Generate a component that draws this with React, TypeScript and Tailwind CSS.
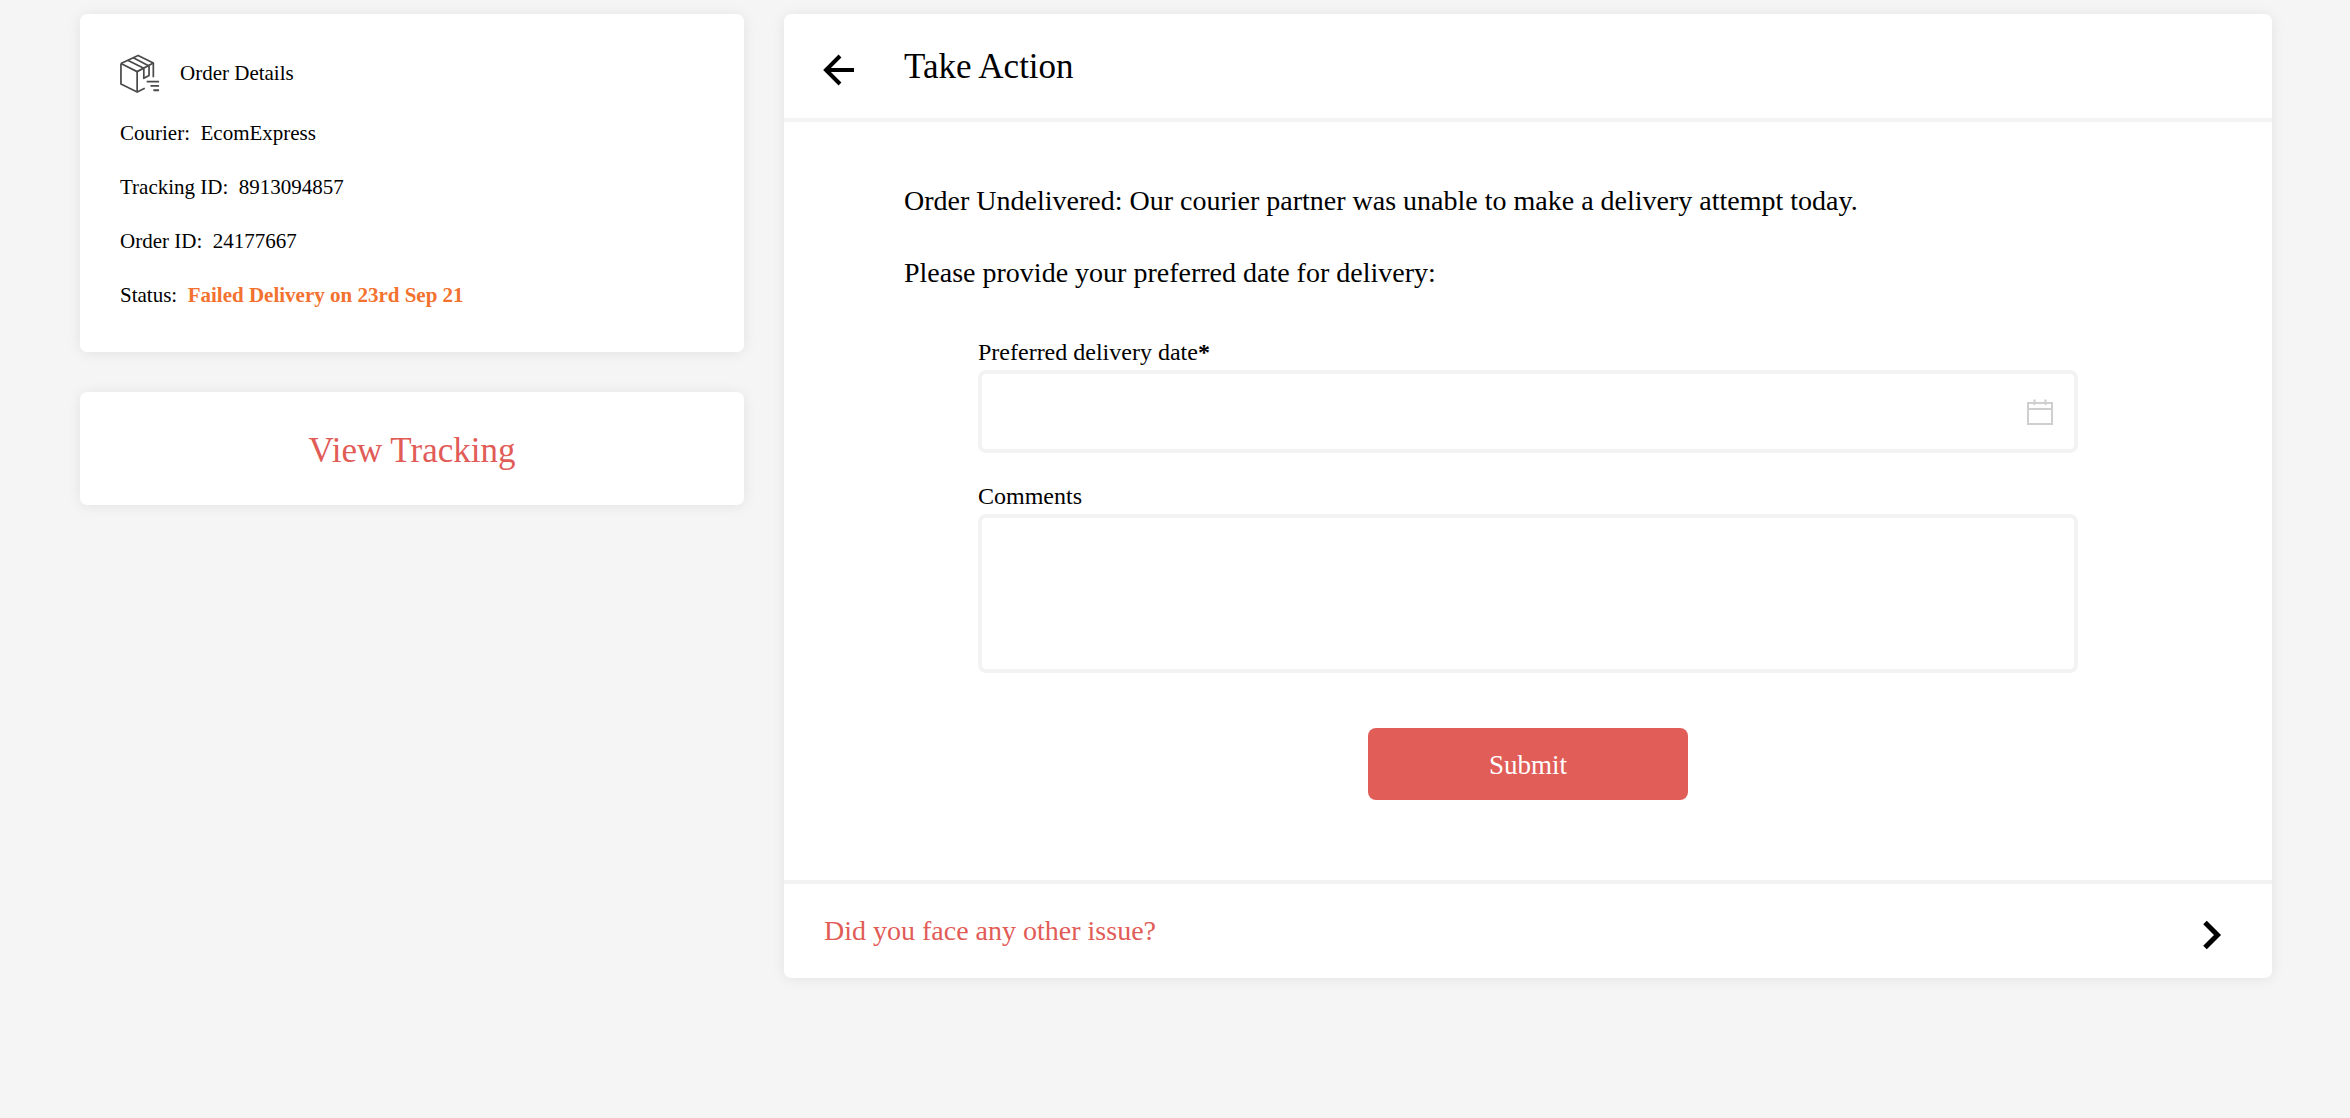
const serif = "font-['Liberation_Serif',serif]";

function PackageIcon() {
  return (
    <svg width="40" height="40" viewBox="0 0 42 41" fill="none" stroke="#4a4a4a" strokeWidth="1.8" strokeLinejoin="round" className="shrink-0">
      <path d="M1 9.5 L19 1 L35 9 L35 24" />
      <path d="M1 9.5 L18 18 L35 9" />
      <path d="M1 9.5 V31 L18 39.5 L26 35.5" />
      <path d="M18 18 V39.5" />
      <path d="M8 6 L25 14.5 M14 3.5 L30.5 12" />
      <path d="M25 14.5 V25 L30.5 22 V12" />
      <path d="M28 28.5 H41 M32 33 H41 M35 37.5 H41" strokeWidth="2" />
    </svg>
  );
}

function Row({ label, value }: { label: string; value: string }) {
  return (
    <div className="text-[21px] leading-[28px] text-black">
      {label}:{"\u00a0\u00a0"}{value}
    </div>
  );
}

export default function App() {
  return (
    <div className={`${serif} min-h-[1118px] bg-[#f5f5f5] pl-[80px] pt-[14px] flex items-start gap-[40px]`}>
      <div className="w-[664px] flex flex-col gap-[40px]">
        <div className="bg-white rounded-[7px] shadow-[0_1px_14px_rgba(0,0,0,0.08)] h-[338px] pl-[40px] pt-[40px] flex flex-col">
          <div className="flex items-center gap-[20px] text-[21px] text-black">
            <PackageIcon />
            <span className="-mt-[1px]">Order Details</span>
          </div>
          <div className="mt-[25px] flex flex-col gap-[26px]">
            <Row label="Courier" value="EcomExpress" />
            <Row label="Tracking ID" value="8913094857" />
            <Row label="Order ID" value="24177667" />
            <div className="text-[21px] leading-[28px] text-black">
              Status:{"\u00a0\u00a0"}<span className="font-bold text-[#f3722f]">Failed Delivery on 23rd Sep 21</span>
            </div>
          </div>
        </div>
        <div className="bg-white rounded-[7px] shadow-[0_1px_14px_rgba(0,0,0,0.08)] h-[113px] pt-[5px] flex items-center justify-center text-[35px] text-[#e15c57]">
          View Tracking
        </div>
      </div>

      <div className="w-[1488px] bg-white rounded-[7px] shadow-[0_1px_14px_rgba(0,0,0,0.08)]">
        <div className="h-[108px] border-b-[4px] border-[#f3f3f3] flex items-center pl-[38px]">
          <svg width="34" height="34" viewBox="0 0 34 34" fill="none" stroke="black" strokeWidth="4" className="shrink-0 mt-[8px]">
            <path d="M32 17 H4 M18 3 L4 17 L18 31" />
          </svg>
          <h1 className="ml-[48px] mt-[2px] text-[35px] font-normal text-black">Take Action</h1>
        </div>

        <div className="h-[762px] border-b-[4px] border-[#f3f3f3] pl-[120px] pt-[61px] text-black">
          <p className="text-[28px] leading-[36px]">Order Undelivered: Our courier partner was unable to make a delivery attempt today.</p>
          <p className="mt-[36px] text-[28px] leading-[36px]">Please provide your preferred date for delivery:</p>

          <div className="ml-[74px] w-[1100px] flex flex-col">
            <label className="mt-[47px] text-[24px] leading-[28px]">Preferred delivery date<b>*</b></label>
            <div className="mt-[4px] h-[83px] rounded-[8px] border-[4px] border-[#f3f3f3] flex items-center justify-end pr-[21px]">
              <svg width="26" height="26" viewBox="0 0 26 26" fill="none" stroke="#cfcfcf" strokeWidth="2">
                <path d="M1 4 H25 V25 H1 Z M1 10 H25" />
                <path d="M7.5 0.5 V6 M18.5 0.5 V6" />
              </svg>
            </div>
            <label className="mt-[29px] text-[24px] leading-[28px]">Comments</label>
            <textarea className="mt-[4px] h-[159px] rounded-[8px] border-[4px] border-[#f3f3f3] resize-none outline-none" />
            <button className="mt-[55px] self-center w-[320px] h-[72px] pt-[2px] rounded-[8px] bg-[#e05d58] text-white text-[27px]">Submit</button>
          </div>
        </div>

        <div className="h-[94px] flex items-center justify-between pl-[40px] pr-[50px]">
          <span className="text-[28px] text-[#e15c57]">Did you face any other issue?</span>
          <svg width="20" height="30" viewBox="0 0 20 30" fill="none" stroke="black" strokeWidth="5" className="shrink-0 mt-[8px]">
            <path d="M3 2.5 L15.5 15 L3 27.5" />
          </svg>
        </div>
      </div>
    </div>
  );
}
